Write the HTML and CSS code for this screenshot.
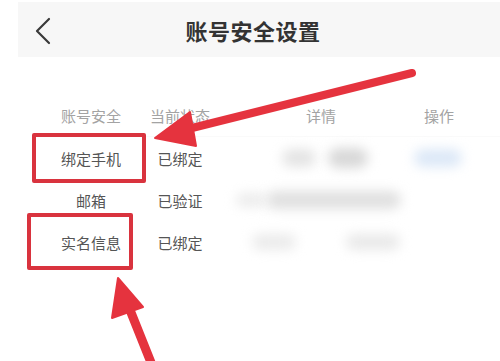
FILE: index.html
```html
<!DOCTYPE html>
<html lang="zh">
<head>
<meta charset="utf-8">
<link rel="stylesheet" href="styles.css">
</head>
<body>
<div class="page">
  <header class="topbar">
    <div class="back">
      <svg width="20" height="28" viewBox="0 0 20 28"><polyline points="15,2 3,14 15,26" fill="none" stroke="#3a3a3a" stroke-width="2.2" stroke-linecap="round" stroke-linejoin="round"/></svg>
    </div>
    <h1 class="title">账号安全设置</h1>
    <div></div>
  </header>

  <div class="table">
    <div class="row head">
      <div class="cell">账号安全</div>
      <div class="cell">当前状态</div>
      <div class="cell">详情</div>
      <div class="cell">操作</div>
    </div>
    <div class="row">
      <div class="cell">绑定手机</div>
      <div class="cell">已绑定</div>
      <div class="cell blurcell"><span class="blob b1"></span><span class="blob b2"></span></div>
      <div class="cell opcell"><span class="blob blue"></span></div>
    </div>
    <div class="row">
      <div class="cell">邮箱</div>
      <div class="cell">已验证</div>
      <div class="cell blurcell"><span class="blob b3"></span><span class="blob b4"></span></div>
      <div class="cell"></div>
    </div>
    <div class="row">
      <div class="cell">实名信息</div>
      <div class="cell">已绑定</div>
      <div class="cell blurcell"><span class="blob b5"></span><span class="blob b6"></span></div>
      <div class="cell"></div>
    </div>
  </div>

  <div class="mark mark1"></div>
  <div class="mark mark2"></div>

  <svg class="arrows" width="500" height="361" viewBox="0 0 500 361">
    <line x1="412" y1="73" x2="180" y2="131" stroke="#e5333e" stroke-width="8" stroke-linecap="round"/>
    <polygon points="155,138 190,112 196,146" fill="#e5333e" stroke="#e5333e" stroke-width="2" stroke-linejoin="round"/>
    <line x1="152" y1="365" x2="126" y2="300" stroke="#e5333e" stroke-width="9" stroke-linecap="round"/>
    <polygon points="118,278 112,318 143,307" fill="#e5333e" stroke="#e5333e" stroke-width="2" stroke-linejoin="round"/>
  </svg>
</div>
</body>
</html>
```

FILE: styles.css
```css
* { box-sizing: border-box; }
html, body { margin: 0; padding: 0; background: #ffffff; }
body {
  width: 500px;
  height: 361px;
  overflow: hidden;
  font-family: "Noto Sans CJK SC", "Noto Sans", sans-serif;
}
.page {
  position: relative;
  width: 500px;
  height: 361px;
  padding-top: 2px;
  overflow: hidden;
}
.topbar {
  margin-left: 18px;
  height: 55px;
  background: #f7f7f7;
  display: grid;
  grid-template-columns: 48px 1fr 60px;
  align-items: center;
}
.back {
  display: flex;
  align-items: center;
  padding-left: 16px;
  padding-top: 2px;
}
.title {
  margin: 0;
  text-align: center;
  font-size: 22px;
  font-weight: 600;
  color: #333333;
  letter-spacing: 0.5px;
}
.table {
  margin-top: 38px;
  padding-left: 38px;
}
.row {
  display: grid;
  grid-template-columns: 106px 72px 210px 26px;
  height: 42px;
  align-items: center;
}
.cell {
  justify-self: center;
  white-space: nowrap;
  font-size: 15px;
  color: #555555;
  position: relative;
}
.head .cell { color: #a3a3a3; }
.head { border-bottom: 1px solid #fafafa; }
.blurcell {
  width: 210px;
  height: 30px;
}
.opcell {
  width: 26px;
  height: 30px;
}
.blob {
  position: absolute;
  display: block;
  border-radius: 10px;
  filter: blur(6px);
  background: #dcdcdc;
}
.b1 { left: 66px; top: 6px; width: 34px; height: 18px; background: #e4e4e4; }
.b2 { left: 112px; top: 5px; width: 40px; height: 20px; background: #d8d8d8; }
.b3 { left: 20px; top: 8px; width: 30px; height: 14px; background: #ececec; }
.b4 { left: 50px; top: 6px; width: 135px; height: 18px; background: #e0e0e0; }
.b5 { left: 36px; top: 7px; width: 44px; height: 16px; background: #ebebeb; }
.b6 { left: 130px; top: 7px; width: 54px; height: 16px; background: #e9e9e9; }
.blue {
  left: -12px;
  top: 6px;
  width: 48px;
  height: 18px;
  background: #dce8f7;
}
.mark {
  position: absolute;
  border: 4px solid #d9333e;
  border-radius: 2px;
}
.mark1 { left: 32px; top: 133px; width: 114px; height: 50px; }
.mark2 { left: 27px; top: 213px; width: 106px; height: 57px; }
.arrows {
  position: absolute;
  left: 0;
  top: 0;
  pointer-events: none;
}
```
